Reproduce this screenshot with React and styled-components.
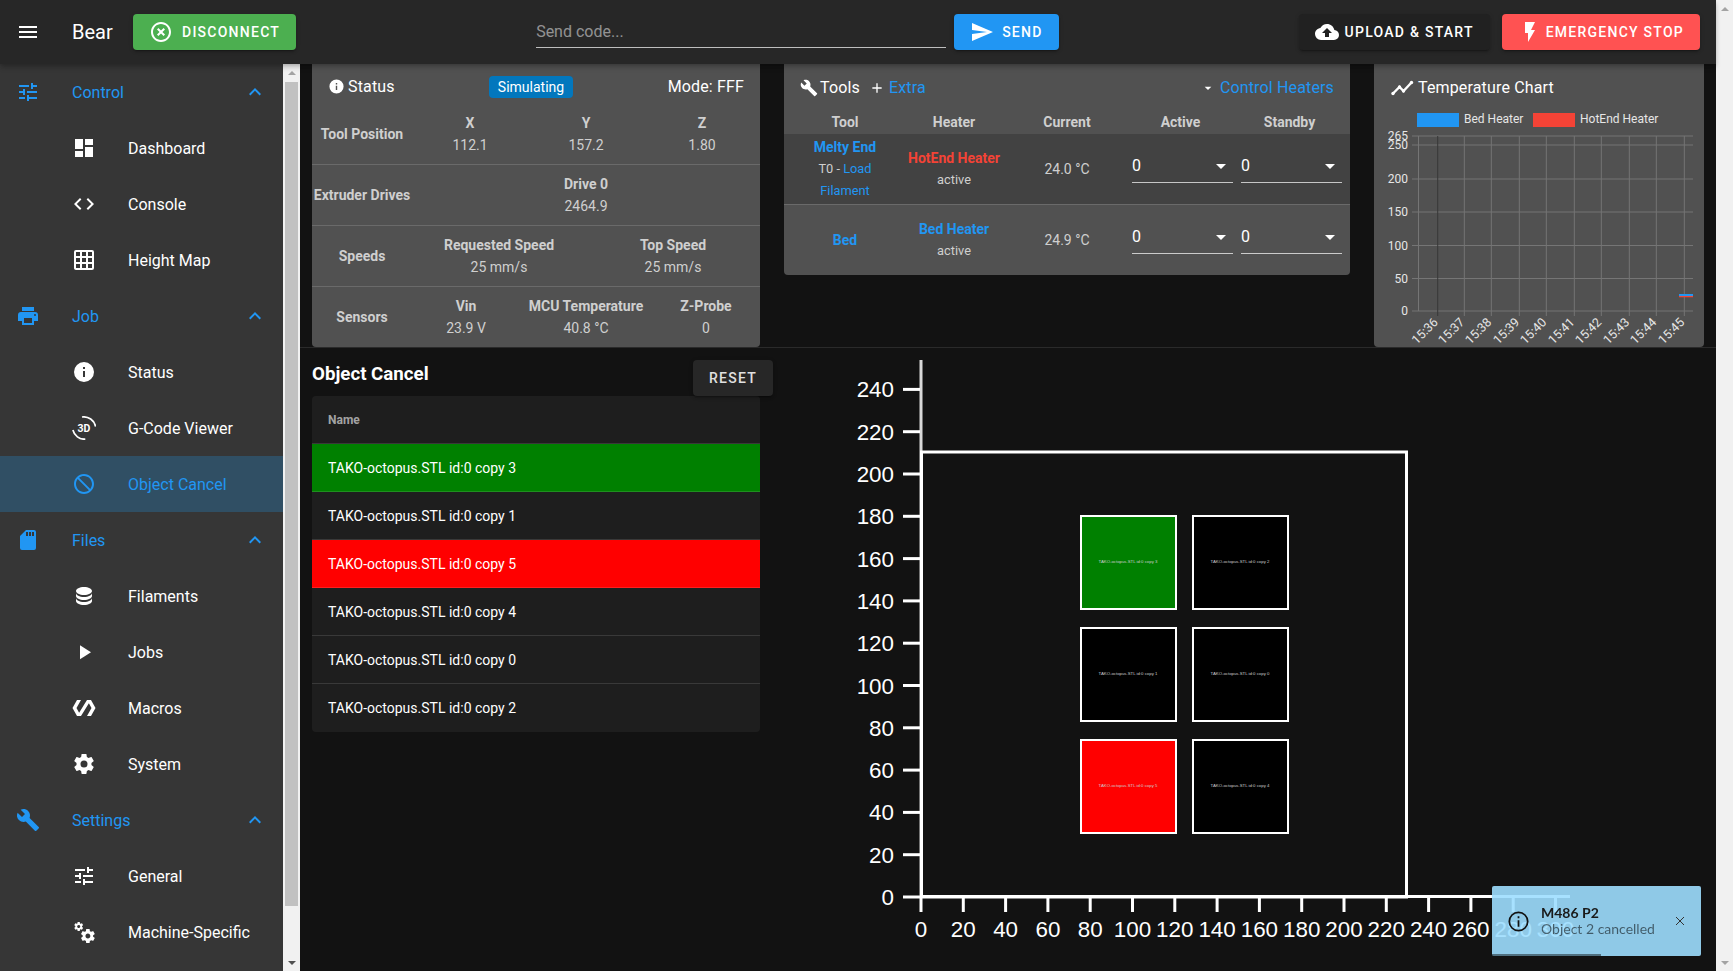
import React from 'react'
import styled, { createGlobalStyle } from 'styled-components'

const BLUE = '#2196f3'

const PATHS = {
  menu: 'M3,6H21V8H3V6M3,11H21V13H3V11M3,16H21V18H3V16Z',
  tune: 'M3,17V19H9V17H3M3,5V7H13V5H3M13,21V19H21V17H13V15H11V21H13M7,9V11H3V13H7V15H9V9H7M21,13V11H11V13H21M15,9H17V7H21V5H17V3H15V9Z',
  dashboard: 'M13,3V9H21V3M13,21H21V11H13M3,21H11V15H3M3,13H11V3H3V13Z',
  code: 'M14.6,16.6L19.2,12L14.6,7.4L16,6L22,12L16,18L14.6,16.6M9.4,16.6L4.8,12L9.4,7.4L8,6L2,12L8,18L9.4,16.6Z',
  grid: 'M10,4V8H14V4H10M16,4V8H20V4H16M16,10V14H20V10H16M16,16V20H20V16H16M14,20V16H10V20H14M8,20V16H4V20H8M8,14V10H4V14H8M8,8V4H4V8H8M10,14H14V10H10V14M4,2H20A2,2 0 0,1 22,4V20A2,2 0 0,1 20,22H4C2.92,22 2,21.1 2,20V4A2,2 0 0,1 4,2Z',
  printer: 'M18,3H6V7H18M19,12A1,1 0 0,1 18,11A1,1 0 0,1 19,10A1,1 0 0,1 20,11A1,1 0 0,1 19,12M16,19H8V14H16M19,8H5A3,3 0 0,0 2,11V17H6V21H18V17H22V11A3,3 0 0,0 19,8Z',
  info: 'M13,9H11V7H13M13,17H11V11H13M12,2A10,10 0 0,0 2,12A10,10 0 0,0 12,22A10,10 0 0,0 22,12A10,10 0 0,0 12,2Z',
  cancel: 'M12 2C17.5 2 22 6.5 22 12S17.5 22 12 22 2 17.5 2 12 6.5 2 12 2M12 4C10.1 4 8.4 4.6 7.1 5.7L18.3 16.9C19.3 15.5 20 13.8 20 12C20 7.6 16.4 4 12 4M16.9 18.3L5.7 7.1C4.6 8.4 4 10.1 4 12C4 16.4 7.6 20 12 20C13.9 20 15.6 19.4 16.9 18.3Z',
  sd: 'M18,8H16V4H18M15,8H13V4H15M12,8H10V4H12M18,2H10L4,8V20A2,2 0 0,0 6,22H18A2,2 0 0,0 20,20V4A2,2 0 0,0 18,2Z',
  database: 'M12,3C7.58,3 4,4.79 4,7C4,9.21 7.58,11 12,11C16.42,11 20,9.21 20,7C20,4.79 16.42,3 12,3M4,9V12C4,14.21 7.58,16 12,16C16.42,16 20,14.21 20,12V9C20,11.21 16.42,13 12,13C7.58,13 4,11.21 4,9M4,14V17C4,19.21 7.58,21 12,21C16.42,21 20,19.21 20,17V14C20,16.21 16.42,18 12,18C7.58,18 4,16.21 4,14Z',
  play: 'M8,5.14V19.14L19,12.14L8,5.14Z',
  polymer: 'M19 4h-4L7.11 16.63 4.5 12 9 4H5L.5 12 5 20h4l7.89-12.63L19.5 12 15 20h4l4.5-8z',
  cog: 'M12,15.5A3.5,3.5 0 0,1 8.5,12A3.5,3.5 0 0,1 12,8.5A3.5,3.5 0 0,1 15.5,12A3.5,3.5 0 0,1 12,15.5M19.43,12.97C19.47,12.65 19.5,12.33 19.5,12C19.5,11.67 19.47,11.34 19.43,11L21.54,9.37C21.73,9.22 21.78,8.95 21.66,8.73L19.66,5.27C19.54,5.05 19.27,4.96 19.05,5.05L16.56,6.05C16.04,5.66 15.5,5.32 14.87,5.07L14.5,2.42C14.46,2.18 14.25,2 14,2H10C9.75,2 9.54,2.18 9.5,2.42L9.13,5.07C8.5,5.32 7.96,5.66 7.44,6.05L4.95,5.05C4.73,4.96 4.46,5.05 4.34,5.27L2.34,8.73C2.21,8.95 2.27,9.22 2.46,9.37L4.57,11C4.53,11.34 4.5,11.67 4.5,12C4.5,12.33 4.53,12.65 4.57,12.97L2.46,14.63C2.27,14.78 2.21,15.05 2.34,15.27L4.34,18.73C4.46,18.95 4.73,19.03 4.95,18.95L7.44,17.94C7.96,18.34 8.5,18.68 9.13,18.93L9.5,21.58C9.54,21.82 9.75,22 10,22H14C14.25,22 14.46,21.82 14.5,21.58L14.87,18.93C15.5,18.67 16.04,18.34 16.56,17.94L19.05,18.95C19.27,19.03 19.54,18.95 19.66,18.73L21.66,15.27C21.78,15.05 21.73,14.78 21.54,14.63L19.43,12.97Z',
  wrench: 'M22.7,19L13.6,9.9C14.5,7.6 14,4.9 12.1,3C10.1,1 7.1,0.6 4.7,1.7L9,6L6,9L1.6,4.7C0.4,7.1 0.9,10.1 2.9,12.1C4.8,14 7.5,14.5 9.8,13.6L18.9,22.7C19.3,23.1 19.9,23.1 20.3,22.7L22.6,20.4C23.1,20 23.1,19.3 22.7,19Z',
  cogs: 'M15.9,18.45C17.25,18.45 18.35,17.35 18.35,16C18.35,14.65 17.25,13.55 15.9,13.55C14.54,13.55 13.45,14.65 13.45,16C13.45,17.35 14.54,18.45 15.9,18.45M21.1,16.68L22.58,17.84C22.71,17.95 22.75,18.13 22.66,18.29L21.26,20.71C21.17,20.86 21,20.92 20.83,20.86L19.09,20.16C18.73,20.44 18.34,20.67 17.91,20.85L17.64,22.7C17.62,22.87 17.47,23 17.3,23H14.5C14.32,23 14.18,22.87 14.15,22.7L13.89,20.85C13.46,20.67 13.07,20.44 12.71,20.16L10.96,20.86C10.81,20.92 10.62,20.86 10.54,20.71L9.14,18.29C9.05,18.13 9.09,17.95 9.22,17.84L10.7,16.68L10.65,16L10.7,15.31L9.22,14.16C9.09,14.05 9.05,13.86 9.14,13.71L10.54,11.29C10.62,11.13 10.81,11.07 10.96,11.13L12.71,11.84C13.07,11.56 13.46,11.32 13.89,11.15L14.15,9.29C14.18,9.13 14.32,9 14.5,9H17.3C17.47,9 17.62,9.13 17.64,9.29L17.91,11.15C18.34,11.32 18.73,11.56 19.09,11.84L20.83,11.13C21,11.07 21.17,11.13 21.26,11.29L22.66,13.71C22.75,13.86 22.71,14.05 22.58,14.16L21.1,15.31L21.15,16L21.1,16.68M6.69,8.07C7.56,8.07 8.26,7.37 8.26,6.5C8.26,5.63 7.56,4.92 6.69,4.92A1.58,1.58 0 0,0 5.11,6.5C5.11,7.37 5.82,8.07 6.69,8.07M10.03,6.94L11,7.68C11.07,7.75 11.09,7.87 11.03,7.97L10.13,9.53C10.08,9.63 9.96,9.67 9.86,9.63L8.74,9.18L8,9.62L7.81,10.81C7.79,10.92 7.7,11 7.59,11H5.79C5.67,11 5.58,10.92 5.56,10.81L5.4,9.62L4.64,9.18L3.5,9.63C3.41,9.67 3.29,9.63 3.23,9.53L2.33,7.97C2.27,7.87 2.3,7.75 2.38,7.68L3.33,6.94L3.31,6.5L3.33,6.06L2.38,5.32C2.3,5.25 2.27,5.13 2.33,5.03L3.23,3.47C3.29,3.37 3.41,3.33 3.5,3.37L4.64,3.82L5.4,3.38L5.56,2.19C5.58,2.08 5.67,2 5.79,2H7.59C7.7,2 7.79,2.08 7.81,2.19L8,3.38L8.74,3.82L9.86,3.37C9.96,3.33 10.08,3.37 10.13,3.47L11.03,5.03C11.09,5.13 11.07,5.25 11,5.32L10.03,6.06L10.05,6.5L10.03,6.94Z',
  chevronUp: 'M7.41,15.41L12,10.83L16.59,15.41L18,14L12,8L6,14L7.41,15.41Z',
  closeCircle: 'M12,20C7.59,20 4,16.41 4,12C4,7.59 7.59,4 12,4C16.41,4 20,7.59 20,12C20,16.41 16.41,20 12,20M12,2C6.47,2 2,6.47 2,12C2,17.53 6.47,22 12,22C17.53,22 22,17.53 22,12C22,6.47 17.53,2 12,2M14.59,8L12,10.59L9.41,8L8,9.41L10.59,12L8,14.59L9.41,16L12,13.41L14.59,16L16,14.59L13.41,12L16,9.41L14.59,8Z',
  send: 'M2,21L23,12L2,3V10L17,12L2,14V21Z',
  upload: 'M14,13V17H10V13H7L12,8L17,13M19.35,10.03C18.67,6.59 15.64,4 12,4C9.11,4 6.6,5.64 5.35,8.03C2.34,8.36 0,10.9 0,14A6,6 0 0,0 6,20H19A5,5 0 0,0 24,15C24,12.36 21.95,10.22 19.35,10.03Z',
  flash: 'M7,2V13H10V22L17,10H13L17,2H7Z',
  plus: 'M19,13H13V19H11V13H5V11H11V5H13V11H19V13Z',
  menuDown: 'M7,10L12,15L17,10H7Z',
}

const GlobalStyle = createGlobalStyle`
  html, body {
    margin: 0;
    height: 100%;
    overflow: hidden;
    background: #121212;
  }
  body {
    font-family: Roboto, sans-serif;
    font-size: 14px;
    color: #fff;
  }
  * { box-sizing: border-box; }
`

const Svg = styled.svg`
  display: block;
  flex: none;
  fill: currentColor;
`

const Icon = ({ name, size = 24, color }) => (
  <Svg viewBox="0 0 24 24" width={size} height={size} style={color ? { color } : undefined}>
    <path d={PATHS[name]} />
  </Svg>
)

const Icon3d = () => (
  <Svg viewBox="0 0 24 24" width={24} height={24}>
    <path d="M10 1a12 12 0 0 1 13.6 9.5" fill="none" stroke="currentColor" strokeWidth="1.7" />
    <path d="M.9 14a12 12 0 0 0 12.4 9.2" fill="none" stroke="currentColor" strokeWidth="1.7" />
    <text x="12" y="16" textAnchor="middle" fontFamily="Roboto" fontWeight="700" fontSize="10.5">3D</text>
  </Svg>
)

const ChartIcon = () => (
  <Svg viewBox="0 0 24 24" width={24} height={24}>
    <path d="M3 17.5L9.5 11L13.5 15L21.5 6.5" fill="none" stroke="currentColor" strokeWidth="2.4" />
    <circle cx="3" cy="17.5" r="1.7" />
    <circle cx="9.5" cy="11" r="1.7" />
    <circle cx="13.5" cy="15" r="1.7" />
    <circle cx="21.5" cy="6.5" r="1.7" />
  </Svg>
)

/* page frame */
const Shell = styled.div`
  display: flex;
  width: 100%;
  height: 100vh;
  overflow: hidden;
`

const Frame = styled.div`
  flex: 1;
  min-width: 0;
  display: flex;
  flex-direction: column;
`

const Body = styled.div`
  flex: 1;
  min-height: 0;
  display: flex;
`

const ScrollBar = styled.div`
  flex: none;
  width: 17px;
  background: #f1f1f1;
  display: grid;
  grid-template-rows: 17px 1fr 17px;
  justify-items: center;
  align-items: center;
`

const ScrollThumb = styled.div`
  width: 13px;
  height: 824px;
  margin-top: 1px;
  align-self: start;
  background: #c1c1c1;
`

const ScrollArrow = styled.div`
  width: 0;
  height: 0;
  border-left: 4px solid transparent;
  border-right: 4px solid transparent;
  ${(p) => (p.$down ? `border-top: 4px solid ${p.$color};` : `border-bottom: 4px solid ${p.$color};`)}
`

/* top bar */
const TopBar = styled.header`
  flex: none;
  height: 64px;
  display: flex;
  align-items: center;
  padding: 0 16px;
  background: #272727;
  position: relative;
  z-index: 2;
  box-shadow: 0 2px 4px -1px rgba(0, 0, 0, 0.2), 0 4px 5px 0 rgba(0, 0, 0, 0.14);
`

const Title = styled.div`
  font-size: 20px;
  margin-left: 32px;
  width: 61px;
`

const Button = styled.button`
  height: 36px;
  padding: 0 16px;
  border: 0;
  border-radius: 4px;
  display: inline-flex;
  align-items: center;
  gap: ${(p) => p.$gap ?? 8}px;
  font-family: Roboto, sans-serif;
  font-size: 14px;
  font-weight: 500;
  letter-spacing: 1.25px;
  color: ${(p) => p.$color || '#fff'};
  background: ${(p) => p.$bg};
  box-shadow: 0 3px 1px -2px rgba(0, 0, 0, 0.2), 0 2px 2px 0 rgba(0, 0, 0, 0.14), 0 1px 5px 0 rgba(0, 0, 0, 0.12);
`

const CodeForm = styled.div`
  display: flex;
  align-items: center;
  gap: 8px;
  margin-left: 240px;
`

const CodeInput = styled.div`
  width: 410px;
  height: 34px;
  margin-top: -2px;
  padding-top: 1px;
  display: flex;
  align-items: center;
  border-bottom: 1px solid rgba(255, 255, 255, 0.7);
  font-size: 16px;
  color: rgba(255, 255, 255, 0.5);
`

const RightActions = styled.div`
  margin-left: auto;
  display: flex;
  gap: 12px;
`

/* sidebar */
const Sidebar = styled.nav`
  flex: none;
  width: 283px;
  background: #363636;
  overflow: hidden;
`

const NavRow = styled.div`
  height: 56px;
  display: flex;
  align-items: center;
  padding-left: ${(p) => (p.$child ? 72 : 16)}px;
  padding-right: 16px;
  font-size: 16px;
  color: ${(p) => (p.$blue ? BLUE : '#fff')};
  background: ${(p) => (p.$active ? '#304f64' : 'transparent')};
`

const NavIcon = styled.span`
  width: 24px;
  display: flex;
  justify-content: center;
  margin-right: 32px;
`

const Chevron = styled.span`
  margin-left: auto;
  display: flex;
`

/* main area */
const Main = styled.main`
  flex: 1;
  min-width: 0;
  display: flex;
  flex-direction: column;
  background: #121212;
`

const Cards = styled.div`
  flex: none;
  display: grid;
  grid-template-columns: 448px 566px 330px;
  column-gap: 24px;
  align-items: start;
  height: 284px;
  padding: 0 12px;
  border-bottom: 1px solid #2a2a2a;
`

const Card = styled.section`
  background: #515151;
  border-radius: 0 0 4px 4px;
  height: ${(p) => p.$height}px;
  overflow: hidden;
`

const CardTitle = styled.div`
  height: 39px;
  padding: 8px 16px 0;
  display: flex;
  align-items: center;
  font-size: 16px;
  letter-spacing: 0.15px;
`

const StatusTitle = styled(CardTitle)`
  height: 40px;
  padding-top: 7px;
  padding-bottom: 2px;
  display: grid;
  grid-template-columns: 161px 84px 1fr;
  align-items: center;
`

const TitleLabel = styled.span`
  display: inline-flex;
  align-items: center;
  gap: ${(p) => p.$gap ?? 4}px;
`

const Badge = styled.span`
  height: 22px;
  border-radius: 4px;
  background: #0277bd;
  font-size: 14px;
  letter-spacing: 0;
  display: flex;
  align-items: center;
  justify-content: center;
`

const Mode = styled.span`
  text-align: right;
`

const StatRow = styled.div`
  height: ${(p) => (p.$last ? 60 : 61)}px;
  display: grid;
  grid-template-columns: 100px ${(p) => p.$cols};
  align-items: center;
  text-align: center;
  border-bottom: ${(p) => (p.$last ? 0 : '1px solid #6a6a6a')};
  color: #cfcfcf;
`

const StatLabel = styled.div`
  margin-top: -1px;
  font-size: 14px;
  font-weight: 700;
  white-space: nowrap;
`

const StatCell = styled.div`
  margin-top: -1px;
  font-size: 14px;
  line-height: 22px;
`

const StatHead = styled.div`
  font-size: 14px;
  font-weight: 700;
`

const ToolGrid = styled.div`
  display: grid;
  grid-template-columns: 122px 96px 130px 109px 109px;
  align-items: center;
  text-align: center;
  color: #cfcfcf;
`

const ToolHead = styled(ToolGrid)`
  height: 25px;
  margin-top: 6px;
  font-size: 14px;
  font-weight: 700;
`

const SelectHead = styled.div`
  padding-right: 12px;
`

const ToolRow = styled(ToolGrid)`
  height: ${(p) => (p.$last ? 70 : 71)}px;
  line-height: 22px;
  font-size: 12.8px;
  background: ${(p) => (p.$shaded ? '#424242' : 'transparent')};
  border-bottom: ${(p) => (p.$last ? 0 : '1px solid #6a6a6a')};
`

const ToolCell = styled.div`
  padding: 0 16px;
`

const HeaterCell = styled.div`
  white-space: nowrap;
`

const CurrentCell = styled.div`
  font-size: 14px;
`

const ToolName = styled.div`
  font-size: 14px;
  font-weight: 700;
  color: ${(p) => p.$color || BLUE};
`

const Link = styled.span`
  color: ${BLUE};
`

const Select = styled.div`
  width: 101px;
  height: 32px;
  margin-top: -4px;
  padding-bottom: 2px;
  display: flex;
  align-items: center;
  justify-content: space-between;
  border-bottom: 1px solid rgba(255, 255, 255, 0.7);
  font-size: 16px;
  color: #fff;
`

const HeaderEnd = styled.span`
  margin-left: auto;
  display: inline-flex;
  align-items: center;
  color: ${BLUE};
`

const ExtraLink = styled.span`
  display: inline-flex;
  align-items: center;
  margin-left: 9px;
  gap: 4px;
  color: ${BLUE};
`

const Lower = styled.div`
  flex: 1;
  min-height: 0;
  display: grid;
  grid-template-columns: 461px 1fr;
  column-gap: 7px;
  padding-left: 12px;
`

const ObjectColumn = styled.div`
  padding-top: 11px;
`

const ObjectHead = styled.div`
  height: 37px;
  padding-top: 1px;
  display: flex;
  align-items: flex-start;
  justify-content: space-between;
`

const ObjectTitle = styled.h3`
  margin: 3px 0 0;
  font-size: 18.72px;
  line-height: 22px;
  font-weight: 700;
`

const ObjectTable = styled.div`
  width: 448px;
  background: #1e1e1e;
  border-radius: 4px;
  overflow: hidden;
`

const ObjectHeadRow = styled.div`
  height: 48px;
  padding-left: 16px;
  display: flex;
  align-items: center;
  font-size: 12px;
  font-weight: 700;
  color: rgba(255, 255, 255, 0.6);
  border-bottom: 1px solid rgba(255, 255, 255, 0.12);
`

const ObjectRow = styled.div`
  height: 48px;
  padding-left: 16px;
  display: flex;
  align-items: center;
  font-size: 14px;
  color: #fff;
  background: ${(p) => p.$bg || 'transparent'};
  border-bottom: ${(p) => (p.$last ? 0 : '1px solid rgba(255, 255, 255, 0.12)')};
`

const PlotArea = styled.div`
  min-width: 0;
  overflow: hidden;
`

/* toast */
const Toast = styled.div`
  position: fixed;
  left: 1492px;
  top: 886px;
  width: 209px;
  height: 70px;
  border-radius: 2px;
  background: rgba(157, 222, 255, 0.9);
  display: flex;
  align-items: center;
  padding-left: 16px;
  font-family: Lato, sans-serif;
  font-size: 14px;
  line-height: 16px;
  overflow: hidden;
  box-shadow: 0 0 1px rgba(0, 0, 0, 0.2);
`

const ToastIcon = styled.svg`
  flex: none;
  width: 21px;
  height: 21px;
  margin-right: 12px;
  stroke: #111;
  fill: none;
`

const ToastTitle = styled.div`
  font-weight: 700;
  color: #1a1a1a;
`

const ToastText = styled.div`
  color: rgba(0, 0, 0, 0.55);
`

const ToastClose = styled.svg`
  position: absolute;
  left: 183px;
  top: 30px;
  width: 10px;
  height: 10px;
  stroke: #333;
`

const ToastProgress = styled.div`
  position: absolute;
  left: 0;
  bottom: 0;
  height: 2px;
  width: 52%;
  background: rgba(0, 0, 0, 0.45);
`

const NAV = [
  { label: 'Control', icon: 'tune', group: true },
  { label: 'Dashboard', icon: 'dashboard' },
  { label: 'Console', icon: 'code' },
  { label: 'Height Map', icon: 'grid' },
  { label: 'Job', icon: 'printer', group: true },
  { label: 'Status', icon: 'info' },
  { label: 'G-Code Viewer', icon: '3d' },
  { label: 'Object Cancel', icon: 'cancel', active: true },
  { label: 'Files', icon: 'sd', group: true },
  { label: 'Filaments', icon: 'database' },
  { label: 'Jobs', icon: 'play' },
  { label: 'Macros', icon: 'polymer' },
  { label: 'System', icon: 'cog' },
  { label: 'Settings', icon: 'wrench', group: true },
  { label: 'General', icon: 'tune' },
  { label: 'Machine-Specific', icon: 'cogs' },
]

const OBJECTS = [
  { name: 'TAKO-octopus.STL id:0 copy 3', bg: '#008000' },
  { name: 'TAKO-octopus.STL id:0 copy 1' },
  { name: 'TAKO-octopus.STL id:0 copy 5', bg: '#ff0000' },
  { name: 'TAKO-octopus.STL id:0 copy 4' },
  { name: 'TAKO-octopus.STL id:0 copy 0' },
  { name: 'TAKO-octopus.STL id:0 copy 2' },
]

const SideNav = () => (
  <Sidebar>
    {NAV.map((item) => (
      <NavRow key={item.label} $child={!item.group} $blue={item.group || item.active} $active={item.active}>
        <NavIcon>{item.icon === '3d' ? <Icon3d /> : <Icon name={item.icon} />}</NavIcon>
        {item.label}
        {item.group && (
          <Chevron>
            <Icon name="chevronUp" />
          </Chevron>
        )}
      </NavRow>
    ))}
  </Sidebar>
)

const StatusCard = () => (
  <Card $height={283}>
    <StatusTitle>
      <TitleLabel $gap={3}>
        <Icon name="info" size={17} />
        Status
      </TitleLabel>
      <Badge>Simulating</Badge>
      <Mode>Mode: FFF</Mode>
    </StatusTitle>
    <StatRow $cols="116px 116px 116px">
      <StatLabel>Tool Position</StatLabel>
      <StatCell><StatHead>X</StatHead>112.1</StatCell>
      <StatCell><StatHead>Y</StatHead>157.2</StatCell>
      <StatCell><StatHead>Z</StatHead>1.80</StatCell>
    </StatRow>
    <StatRow $cols="348px">
      <StatLabel>Extruder Drives</StatLabel>
      <StatCell><StatHead>Drive 0</StatHead>2464.9</StatCell>
    </StatRow>
    <StatRow $cols="174px 174px">
      <StatLabel>Speeds</StatLabel>
      <StatCell><StatHead>Requested Speed</StatHead>25 mm/s</StatCell>
      <StatCell><StatHead>Top Speed</StatHead>25 mm/s</StatCell>
    </StatRow>
    <StatRow $cols="108px 132px 108px" $last>
      <StatLabel>Sensors</StatLabel>
      <StatCell><StatHead>Vin</StatHead>23.9 V</StatCell>
      <StatCell><StatHead>MCU Temperature</StatHead>40.8 °C</StatCell>
      <StatCell><StatHead>Z-Probe</StatHead>0</StatCell>
    </StatRow>
  </Card>
)

const TempSelect = () => (
  <Select>
    0
    <Icon name="menuDown" size={24} />
  </Select>
)

const ToolsCard = () => (
  <Card $height={211}>
    <CardTitle>
      <TitleLabel $gap={2}>
        <Icon name="wrench" size={18} />
        Tools
      </TitleLabel>
      <ExtraLink>
        <Icon name="plus" size={16} color="#fff" />
        Extra
      </ExtraLink>
      <HeaderEnd>
        <Icon name="menuDown" size={16} color="#fff" />
        &nbsp;Control Heaters
      </HeaderEnd>
    </CardTitle>
    <ToolHead>
      <div>Tool</div>
      <div>Heater</div>
      <div>Current</div>
      <SelectHead>Active</SelectHead>
      <SelectHead>Standby</SelectHead>
    </ToolHead>
    <ToolRow $shaded>
      <ToolCell>
        <ToolName>Melty End</ToolName>
        T0 - <Link>Load Filament</Link>
      </ToolCell>
      <HeaterCell>
        <ToolName $color="#f44336">HotEnd Heater</ToolName>
        active
      </HeaterCell>
      <CurrentCell>24.0 °C</CurrentCell>
      <TempSelect />
      <TempSelect />
    </ToolRow>
    <ToolRow $last>
      <ToolName>Bed</ToolName>
      <HeaterCell>
        <ToolName>Bed Heater</ToolName>
        active
      </HeaterCell>
      <CurrentCell>24.9 °C</CurrentCell>
      <TempSelect />
      <TempSelect />
    </ToolRow>
  </Card>
)

const CHART_X = [1437.7, 1464.3, 1491.3, 1519.3, 1546.3, 1574.3, 1601.3, 1629.3, 1656.3, 1684.3]
const CHART_LABELS = ['15:36', '15:37', '15:38', '15:39', '15:40', '15:41', '15:42', '15:43', '15:44', '15:45']
const CHART_Y = [
  { v: 265, y: 136 },
  { v: 250, y: 145 },
  { v: 200, y: 179 },
  { v: 150, y: 212 },
  { v: 100, y: 245.5 },
  { v: 50, y: 278.5 },
  { v: 0, y: 311 },
]

const TempChart = () => (
  <svg viewBox="1374 103 330 244" width="330" height="244" style={{ display: 'block' }} fontFamily="Roboto" fontSize="12">
    <rect x="1417" y="113" width="42" height="14" fill="#2196f3" />
    <text x="1464" y="122.5" fill="#e6e6e6">Bed Heater</text>
    <rect x="1533" y="113" width="42" height="14" fill="#f44336" />
    <text x="1580" y="122.5" fill="#e6e6e6">HotEnd Heater</text>
    {CHART_Y.map((t) => (
      <g key={t.v}>
        <line x1="1412" x2="1693" y1={t.y} y2={t.y} stroke="#757575" />
        <text x="1408" y={t.y + 4} textAnchor="end" fill="#e6e6e6">{t.v}</text>
      </g>
    ))}
    <line x1="1418.5" x2="1418.5" y1="136" y2="311" stroke="#757575" />
    {CHART_X.map((x, i) => (
      <g key={x}>
        <line x1={x} x2={x} y1="136" y2="316" stroke={i === 0 ? '#383838' : '#757575'} />
        <text x={x + 1} y="323" textAnchor="end" fontSize="12.5" fill="#e6e6e6" transform={`rotate(-45 ${x + 1} 323)`}>
          {CHART_LABELS[i]}
        </text>
      </g>
    ))}
    <line x1="1679" x2="1693" y1="296.6" y2="296.6" stroke="#f44336" strokeWidth="1.5" />
    <line x1="1679" x2="1693" y1="295" y2="295" stroke="#2196f3" strokeWidth="2" />
  </svg>
)

/* object plot: 2.115px per mm, origin at 921,897 */
const toX = (v) => 921 + v * 2.115
const toY = (v) => 897 - v * 2.115
const X_TICKS = Array.from({ length: 16 }, (_, i) => i * 20)
const Y_TICKS = Array.from({ length: 13 }, (_, i) => i * 20)

const PLOT_OBJECTS = [
  { x: 1080, y: 515, fill: '#008000', label: 'TAKO-octopus.STL id:0 copy 3' },
  { x: 1192, y: 515, fill: '#000', label: 'TAKO-octopus.STL id:0 copy 2' },
  { x: 1080, y: 627, fill: '#000', label: 'TAKO-octopus.STL id:0 copy 1' },
  { x: 1192, y: 627, fill: '#000', label: 'TAKO-octopus.STL id:0 copy 0' },
  { x: 1080, y: 739, fill: '#ff0000', label: 'TAKO-octopus.STL id:0 copy 5' },
  { x: 1192, y: 739, fill: '#000', label: 'TAKO-octopus.STL id:0 copy 4' },
]

const ObjectPlot = () => (
  <svg viewBox="780 348 936 623" width="936" height="623" style={{ display: 'block' }} fontFamily="Liberation Sans" fontSize="22.4" fill="#fff">
    <line x1="921" x2="921" y1="360" y2="897" stroke="#d8d8d8" strokeWidth="3" />
    <line x1="921" x2="1570" y1="896.5" y2="896.5" stroke="#fff" strokeWidth="3" />
    <rect x="921.5" y="452" width="485" height="445" fill="none" stroke="#fff" strokeWidth="3" />
    {Y_TICKS.map((v) => (
      <g key={v}>
        <line x1="903" x2="920" y1={toY(v)} y2={toY(v)} stroke="#fff" strokeWidth="3" />
        <text x="894" y={toY(v) + 8} textAnchor="end">{v}</text>
      </g>
    ))}
    {X_TICKS.map((v) => (
      <g key={v}>
        <line x1={toX(v)} x2={toX(v)} y1="897" y2="912" stroke="#fff" strokeWidth="3" />
        <text x={toX(v)} y="937" textAnchor="middle">{v}</text>
      </g>
    ))}
    {PLOT_OBJECTS.map((o) => (
      <g key={o.label}>
        <rect x={o.x + 1} y={o.y + 1} width="95" height="93" fill={o.fill} stroke="#fff" strokeWidth="2" />
        <text x={o.x + 48} y={o.y + 47.5} textAnchor="middle" fontSize="4.3" fill="#ccc">{o.label}</text>
      </g>
    ))}
  </svg>
)

const App = () => (
  <Shell>
    <GlobalStyle />
    <Frame>
      <TopBar>
        <Svg viewBox="0 0 24 24" width={24} height={24}><path d={PATHS.menu} /></Svg>
        <Title>Bear</Title>
        <Button $bg="#4caf50" $gap={9}>
          <Icon name="closeCircle" size={24} />
          DISCONNECT
        </Button>
        <CodeForm>
          <CodeInput>Send code...</CodeInput>
          <Button $bg={BLUE}>
            <Icon name="send" size={24} />
            SEND
          </Button>
        </CodeForm>
        <RightActions>
          <Button $bg="#212121" $gap={6}>
            <Icon name="upload" size={24} />
            UPLOAD &amp; START
          </Button>
          <Button $bg="#ff5252" $gap={4}>
            <Icon name="flash" size={24} />
            EMERGENCY STOP
          </Button>
        </RightActions>
      </TopBar>
      <Body>
        <SideNav />
        <ScrollBar>
          <ScrollArrow $color="#a3a3a3" />
          <ScrollThumb />
          <ScrollArrow $down $color="#505050" />
        </ScrollBar>
        <Main>
          <Cards>
            <StatusCard />
            <ToolsCard />
            <Card $height={283}>
              <CardTitle>
                <TitleLabel>
                  <ChartIcon />
                  Temperature Chart
                </TitleLabel>
              </CardTitle>
              <TempChart />
            </Card>
          </Cards>
          <Lower>
            <ObjectColumn>
              <ObjectHead>
                <ObjectTitle>Object Cancel</ObjectTitle>
                <Button $bg="#272727" $color="#e0e0e0">RESET</Button>
              </ObjectHead>
              <ObjectTable>
                <ObjectHeadRow>Name</ObjectHeadRow>
                {OBJECTS.map((o, i) => (
                  <ObjectRow key={o.name} $bg={o.bg} $last={i === OBJECTS.length - 1}>{o.name}</ObjectRow>
                ))}
              </ObjectTable>
            </ObjectColumn>
            <PlotArea>
              <ObjectPlot />
            </PlotArea>
          </Lower>
        </Main>
      </Body>
    </Frame>
    <ScrollBar>
      <ScrollArrow $color="#a3a3a3" />
      <span />
      <ScrollArrow $down $color="#a3a3a3" />
    </ScrollBar>
    <Toast>
      <ToastIcon viewBox="0 0 24 24" strokeWidth="2">
        <circle cx="12" cy="12" r="10.5" />
        <line x1="12" x2="12" y1="10.5" y2="18" />
        <line x1="12" x2="12" y1="6" y2="8.2" />
      </ToastIcon>
      <div>
        <ToastTitle>M486 P2</ToastTitle>
        <ToastText>Object 2 cancelled</ToastText>
      </div>
      <ToastClose viewBox="0 0 10 10" strokeWidth="1">
        <line x1="1" y1="1" x2="9" y2="9" />
        <line x1="9" y1="1" x2="1" y2="9" />
      </ToastClose>
      <ToastProgress />
    </Toast>
  </Shell>
)

export default App
